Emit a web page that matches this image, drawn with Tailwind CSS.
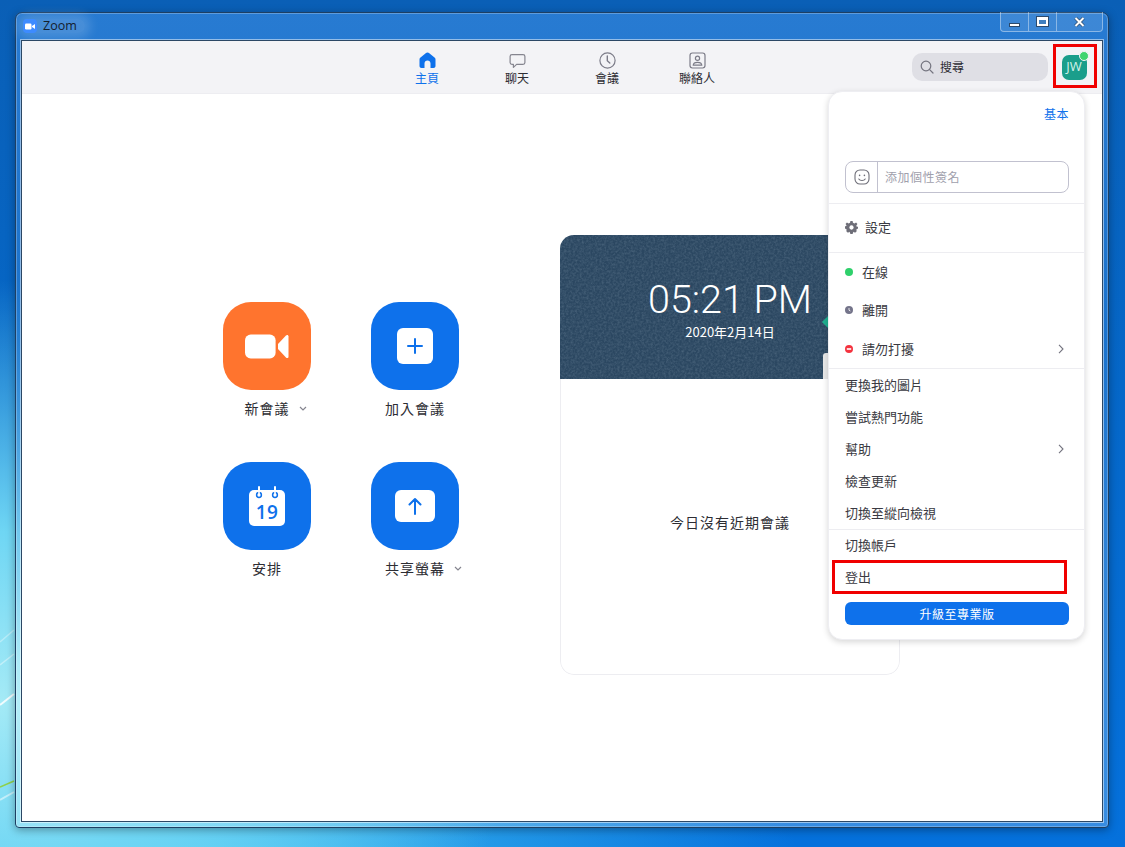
<!DOCTYPE html>
<html lang="zh-Hant">
<head>
    <meta charset="UTF-8">
    <title>Zoom</title>
    <script src="https://cdn.jsdelivr.net/npm/@tailwindcss/browser@4"></script>
</head>
<body class="overflow-hidden">
<!-- desktop -->
<div class="relative w-[1125px] h-[847px] overflow-hidden font-['Noto_Sans_CJK_TC','Open_Sans',sans-serif] bg-[radial-gradient(ellipse_520px_420px_at_0px_700px,#a4eaf6_0%,#6fd6f4_40%,transparent_100%),radial-gradient(ellipse_700px_200px_at_100px_860px,#4accf6_0%,transparent_100%),linear-gradient(180deg,#0a5fb6_0%,#0567c8_45%,#0571dc_100%)]">
    <svg class="absolute left-0 top-0" width="30" height="847" fill="none">
        <path d="M0 642 L14 630" stroke="#fff" stroke-opacity=".35" stroke-width="1.5"/>
        <path d="M0 665 L14 654" stroke="#fff" stroke-opacity=".4" stroke-width="1.5"/>
        <path d="M0 705 L14 694" stroke="#fff" stroke-opacity=".85" stroke-width="2"/>
        <path d="M0 787 L14 781" stroke="#8fd14a" stroke-width="1.5"/>
        <path d="M0 800 L14 792" stroke="#fff" stroke-opacity=".5" stroke-width="2"/>
    </svg>

    <!-- window -->
    <div class="absolute left-[15px] top-[12px] w-[1094px] h-[816px] rounded-t-[7px] rounded-b-[4px] border border-[#1d3f63] bg-[linear-gradient(180deg,rgba(42,125,212,0.92)_0%,rgba(42,125,212,0.55)_40%,rgba(255,255,255,0.2)_80%)] shadow-[inset_0_0_0_1px_rgba(255,255,255,0.25),0_2px_8px_rgba(0,0,0,0.35)] px-[5px] pb-[5px] pt-[27px]">
        <!-- title bar -->
        <div class="absolute left-[7px] top-[6px] flex items-center gap-[6px] pr-[8px] rounded-[10px] bg-white/15 shadow-[0_0_10px_6px_rgba(255,255,255,0.15)]">
            <div class="w-[14px] h-[14px] rounded-[4px] bg-[#3d8bff] flex items-center justify-center">
                <svg width="10" height="7" viewBox="0 0 10 7" fill="#fff"><rect x="0" y="0.5" width="6.5" height="6" rx="1.2"/><path d="M7 3 L10 1 V6 L7 4 Z"/></svg>
            </div>
            <span class="text-[12.5px] leading-[14px] text-[#14202e] font-['Open_Sans',sans-serif]">Zoom</span>
        </div>
        <div class="absolute right-[5px] top-[-1px] flex h-[20px] w-[103px] rounded-b-[4px] border border-t-0 border-white/40 bg-white/10">
            <div class="w-[28px] flex items-center justify-center border-r border-white/40">
                <div class="w-[11px] h-[4px] mt-[6px] bg-white border border-[#2c4a6c]"></div>
            </div>
            <div class="w-[28px] flex items-center justify-center border-r border-white/40">
                <div class="w-[11px] h-[9px] border-2 border-t-[3px] border-white outline outline-[#2c4a6c] bg-[#3f7fc0]"></div>
            </div>
            <div class="flex-1 flex items-center justify-center">
                <svg width="11" height="10" viewBox="0 0 11 10"><path d="M1.5 1 L9.5 9 M9.5 1 L1.5 9" stroke="#2c4a6c" stroke-width="3.4"/><path d="M1.5 1 L9.5 9 M9.5 1 L1.5 9" stroke="#fff" stroke-width="2"/></svg>
            </div>
        </div>

        <!-- client area -->
        <div class="relative h-full flex flex-col bg-white border border-[#2b4765] shadow-[0_0_0_1px_rgba(255,255,255,0.5)]">
            <!-- toolbar -->
            <div class="h-[53px] shrink-0 bg-[#f3f3f6] border-b border-[#ededf1] grid grid-cols-[1fr_360px_1fr]">
                <div></div>
                <nav class="grid grid-cols-4 text-[12px] leading-[16px] text-[#2d2d33]">
                    <a class="flex flex-col items-center pt-[11px] text-[#0e71eb]">
                        <svg class="h-[17px]" width="17" height="17" viewBox="0 0 17 17" fill="#0e71eb"><path d="M8.5 0.5 C7.8 0.5 7.2 0.8 6.7 1.2 L1.2 5.7 C0.6 6.2 0.5 6.8 0.5 7.5 V14 C0.5 15.2 1.3 16 2.5 16 H5.5 V11.5 C5.5 9.8 6.8 8.6 8.5 8.6 C10.2 8.6 11.5 9.8 11.5 11.5 V16 H14.5 C15.7 16 16.5 15.2 16.5 14 V7.5 C16.5 6.8 16.4 6.2 15.8 5.7 L10.3 1.2 C9.8 0.8 9.2 0.5 8.5 0.5 Z"/></svg>
                        <span class="mt-[1px]">主頁</span>
                    </a>
                    <a class="flex flex-col items-center pt-[11px]">
                        <svg class="h-[17px]" width="17" height="17" viewBox="0 0 17 17" fill="none" stroke="#85858f" stroke-width="1.2"><path d="M3 2.6 H14 C15 2.6 15.9 3.4 15.9 4.4 V10.6 C15.9 11.6 15 12.4 14 12.4 H7.6 L4.4 15.4 V12.4 H3 C2 12.4 1.1 11.6 1.1 10.6 V4.4 C1.1 3.4 2 2.6 3 2.6 Z" stroke-linejoin="round"/></svg>
                        <span class="mt-[1px]">聊天</span>
                    </a>
                    <a class="flex flex-col items-center pt-[11px]">
                        <svg class="h-[17px]" width="17" height="17" viewBox="0 0 17 17" fill="none" stroke="#7c7c88" stroke-width="1.2"><circle cx="8.5" cy="8.5" r="7.6"/><path d="M8.3 4 V8.8 L10.8 11" stroke-width="1.4" stroke-linecap="round" stroke-linejoin="round"/></svg>
                        <span class="mt-[1px]">會議</span>
                    </a>
                    <a class="flex flex-col items-center pt-[11px]">
                        <svg class="h-[17px]" width="17" height="17" viewBox="0 0 17 17" fill="none" stroke="#7c7c88" stroke-width="1.2"><rect x="1" y="1" width="15" height="15" rx="2.4"/><circle cx="8.5" cy="6.2" r="2.1"/><path d="M4.2 13.2 C4.4 11 6 10.3 8.5 10.3 C11 10.3 12.6 11 12.8 13.2 Z" stroke-linejoin="round"/></svg>
                        <span class="mt-[1px]">聯絡人</span>
                    </a>
                </nav>
                <div class="flex justify-end items-center h-[44px] mt-[3px] pr-[5px]">
                    <div class="w-[136px] h-[28px] mt-[2px] rounded-[10px] bg-[#dfdfe5] flex items-center pl-[8px] gap-[6px] mr-[5px]">
                        <svg width="14" height="14" viewBox="0 0 14 14" fill="none" stroke="#74747f" stroke-width="1.2"><circle cx="6" cy="6" r="4.8"/><path d="M9.6 9.6 L13 13" stroke-linecap="round"/></svg>
                        <span class="text-[12px] leading-[14px] mb-[1px] text-[#2d2d33]">搜尋</span>
                    </div>
                    <div class="w-[44px] h-[44px] border-[3px] border-[#f00000] flex items-center justify-center">
                        <div class="relative w-[25px] h-[25px] mt-[2px] mr-[2px] rounded-[7px] bg-[#1a9e8b] text-[13px] text-[#d5f2ea] flex items-center justify-center font-['Open_Sans',sans-serif]">
                            JW
                            <span class="absolute -right-[2px] -top-[4px] w-[10px] h-[10px] rounded-full bg-[#3fd46f] border border-[#f3f3f6]"></span>
                        </div>
                    </div>
                </div>
            </div>

            <!-- home -->
            <main class="flex-1 flex items-start pl-[201px] pt-[141px]">
                <div class="grid grid-cols-[88px_88px] gap-x-[60px] auto-rows-[160px] mt-[67px] text-[14px] tracking-[1px] leading-[20px] text-[#2d2d33]">
                    <div class="flex flex-col items-center">
                        <div class="w-[88px] h-[88px] rounded-[28px] bg-[#ff742e] flex items-center justify-center">
                            <svg width="44" height="25" viewBox="0 0 46 26" fill="#fff"><rect x="0" y="0.5" width="32" height="25" rx="6"/><path d="M34.5 10.5 L42.8 1.6 C44 0.4 45.5 1 45.5 2.6 V23.4 C45.5 25 44 25.6 42.8 24.4 L34.5 15.5 Z"/></svg>
                        </div>
                        <div class="relative mt-[8px] w-max">新會議
                            <svg class="absolute -right-[17px] top-[8px]" width="8" height="5" viewBox="0 0 8 5" fill="none" stroke="#85858f" stroke-width="1.2"><path d="M1 1 L4 4 L7 1"/></svg>
                        </div>
                    </div>
                    <div class="flex flex-col items-center">
                        <div class="w-[88px] h-[88px] rounded-[28px] bg-[#0e71eb] flex items-center justify-center">
                            <div class="w-[36px] h-[36px] rounded-[6px] bg-white flex items-center justify-center">
                                <svg width="16" height="16" viewBox="0 0 16 16" stroke="#0e71eb" stroke-width="2" stroke-linecap="round"><path d="M8 1 V15 M1 8 H15"/></svg>
                            </div>
                        </div>
                        <div class="mt-[8px] w-max">加入會議</div>
                    </div>
                    <div class="flex flex-col items-center">
                        <div class="w-[88px] h-[88px] rounded-[28px] bg-[#0e71eb] flex items-center justify-center">
                            <svg width="36" height="40" viewBox="0 0 36 40">
                                <rect x="0" y="4" width="36" height="36" rx="5" fill="#fff"/>
                                <path d="M10 1 V8.5 M26 1 V8.5" stroke="#fff" stroke-width="2" stroke-linecap="round"/>
                                <circle cx="10" cy="9" r="2.4" fill="none" stroke="#0e71eb" stroke-width="1.5"/>
                                <circle cx="26" cy="9" r="2.4" fill="none" stroke="#0e71eb" stroke-width="1.5"/>
                                <path d="M10 5 V8.5 M26 5 V8.5" stroke="#fff" stroke-width="1.6"/>
                                <text x="18" y="32.5" text-anchor="middle" font-family="Open Sans" font-weight="600" font-size="19" letter-spacing="0.5" fill="#0e71eb">19</text>
                            </svg>
                        </div>
                        <div class="mt-[8px] w-max">安排</div>
                    </div>
                    <div class="flex flex-col items-center">
                        <div class="w-[88px] h-[88px] rounded-[28px] bg-[#0e71eb] flex items-center justify-center">
                            <div class="w-[40px] h-[32px] rounded-[6px] bg-white flex items-center justify-center">
                                <svg width="14" height="18" viewBox="0 0 14 18" fill="none" stroke="#0e71eb" stroke-width="2" stroke-linecap="round" stroke-linejoin="round"><path d="M7 17 V2 M1.5 7.5 L7 2 L12.5 7.5"/></svg>
                            </div>
                        </div>
                        <div class="relative mt-[8px] w-max">共享螢幕
                            <svg class="absolute -right-[17px] top-[8px]" width="8" height="5" viewBox="0 0 8 5" fill="none" stroke="#85858f" stroke-width="1.2"><path d="M1 1 L4 4 L7 1"/></svg>
                        </div>
                    </div>
                </div>

                <!-- upcoming card -->
                <div class="ml-[101px] w-[340px] h-[440px] flex flex-col rounded-[14px] overflow-hidden">
                    <div class="relative h-[144px] shrink-0 bg-[#2b4761] overflow-hidden flex flex-col items-center text-white">
                        <svg class="absolute inset-0" width="340" height="144">
                            <filter id="noise"><feTurbulence type="fractalNoise" baseFrequency="0.45" numOctaves="3"/><feColorMatrix values="0 0 0 0 0.55  0 0 0 0 0.68  0 0 0 0 0.78  0 0 0 0.3 -0.1"/></filter>
                            <rect width="340" height="144" filter="url(#noise)"/>
                        </svg>
                        <div class="absolute left-[264px] top-[82px] w-[10px] h-[10px] rotate-45 bg-[#1fae8f]"></div>
                        <div class="absolute left-[263px] top-[118px] w-[12px] h-[30px] rounded-tl-[3px] bg-[#e8e8e8]"></div>
                        <div class="relative mt-[41px] text-[39.5px] leading-[48px] font-light font-['Roboto',sans-serif]">05:21 PM</div>
                        <div class="relative text-[13px] leading-[18px] -mt-[1px]">2020年2月14日</div>
                    </div>
                    <div class="flex-1 flex items-center justify-center pb-[8px] rounded-b-[14px] border-x border-b border-[#ededf1] text-[14px] tracking-[1px] text-[#2d2d33]">今日沒有近期會議</div>
                </div>
            </main>

            <!-- profile menu -->
            <div class="absolute left-[806px] top-[50px] w-[257px] h-[549px] flex flex-col rounded-[14px] bg-white border border-[#eeeef2] shadow-[0_2px_6px_rgba(0,0,0,0.16)] text-[13px] leading-[18px] text-[#3a3a42]">
                <div class="h-[112px] shrink-0 border-b border-[#ededf1] pl-[16px] pr-[15px] flex flex-col">
                    <div class="mt-[13px] text-right text-[12px] leading-[18px] tracking-[0.5px] text-[#0e71eb]">基本</div>
                    <div class="mt-[38px] h-[32px] flex rounded-[8px] border border-[#c1c1cf]">
                        <div class="w-[32px] shrink-0 border-r border-[#c1c1cf] flex items-center justify-center">
                            <svg width="16" height="16" viewBox="0 0 16 16" fill="none" stroke="#6e6e78" stroke-width="1.1"><rect x="1" y="1" width="14" height="14" rx="5"/><circle cx="5.6" cy="6.4" r=".8" fill="#6e6e78" stroke="none"/><circle cx="10.4" cy="6.4" r=".8" fill="#6e6e78" stroke="none"/><path d="M4.8 10 C6 12 10 12 11.2 10" stroke-linecap="round"/></svg>
                        </div>
                        <div class="pl-[7px] flex items-center text-[12px] tracking-[0.5px] text-[#a0a0ac]">添加個性簽名</div>
                    </div>
                </div>
                <div class="h-[49px] shrink-0 border-b border-[#ededf1] pl-[16px] pr-[15px] pb-[2px] flex items-center gap-[7px]">
                    <svg width="13" height="13" viewBox="0 0 24 24" fill="#6e6e78" fill-rule="evenodd"><path d="M10 0 H14 L14.7 3.4 L17.4 4.5 L20.4 2.6 L23 5.6 L20.9 8.4 L22 11 L24 10 V14 L20.9 15.6 L21.6 18.8 L18.6 21.6 L15.6 20 L14 24 H10 L8.4 20 L5.4 21.6 L2.4 18.8 L3.1 15.6 L0 14 V10 L3.1 8.4 L1 5.6 L3.6 2.6 L6.6 4.5 L9.3 3.4 Z M12 8 A4 4 0 1 0 12.01 8 Z"/></svg>
                    <span>設定</span>
                </div>
                <div class="h-[116px] shrink-0 border-b border-[#ededf1] pl-[16px] pr-[15px] flex flex-col">
                    <div class="h-[38px] flex items-center gap-[9px]">
                        <span class="w-[8px] h-[8px] rounded-full bg-[#2fd06b]"></span><span>在線</span>
                    </div>
                    <div class="h-[38px] flex items-center gap-[9px]">
                        <svg width="8" height="8" viewBox="0 0 8 8"><circle cx="4" cy="4" r="4" fill="#74748a"/><path d="M4 2 V4.2 L5.4 5" stroke="#fff" stroke-width=".8" fill="none"/></svg><span>離開</span>
                    </div>
                    <div class="h-[38px] mt-[1px] flex items-center gap-[9px]">
                        <svg width="8" height="8" viewBox="0 0 8 8"><circle cx="4" cy="4" r="4" fill="#f4333f"/><rect x="1.8" y="3.2" width="4.4" height="1.6" fill="#fff"/></svg><span>請勿打擾</span>
                        <svg class="ml-auto mr-[5px]" width="6" height="10" viewBox="0 0 6 10" fill="none" stroke="#74747f" stroke-width="1.1"><path d="M1 .8 L5 5 L1 9.2"/></svg>
                    </div>
                </div>
                <div class="h-[161px] shrink-0 border-b border-[#ededf1] pl-[16px] pr-[15px] flex flex-col">
                    <div class="h-[32px] flex items-center">更換我的圖片</div>
                    <div class="h-[32px] flex items-center">嘗試熱門功能</div>
                    <div class="h-[32px] flex items-center">
                        <span>幫助</span>
                        <svg class="ml-auto mr-[5px]" width="6" height="10" viewBox="0 0 6 10" fill="none" stroke="#74747f" stroke-width="1.1"><path d="M1 .8 L5 5 L1 9.2"/></svg>
                    </div>
                    <div class="h-[32px] flex items-center">檢查更新</div>
                    <div class="h-[32px] flex items-center">切換至縱向檢視</div>
                </div>
                <div class="flex-1 pl-[16px] pr-[15px] flex flex-col">
                    <div class="h-[32px] -mt-[1px] flex items-center">切換帳戶</div>
                    <div class="relative h-[32px] flex items-center">
                        登出
                        <div class="absolute left-[-13px] top-[-1px] w-[235px] h-[34px] border-[3px] border-[#f00000]"></div>
                    </div>
                    <div class="mt-[9px] h-[23px] rounded-[6px] bg-[#0e71eb] text-white text-[12px] tracking-[0.5px] flex items-center justify-center">升級至專業版</div>
                </div>
            </div>
        </div>
    </div>
</div>
</body>
</html>
